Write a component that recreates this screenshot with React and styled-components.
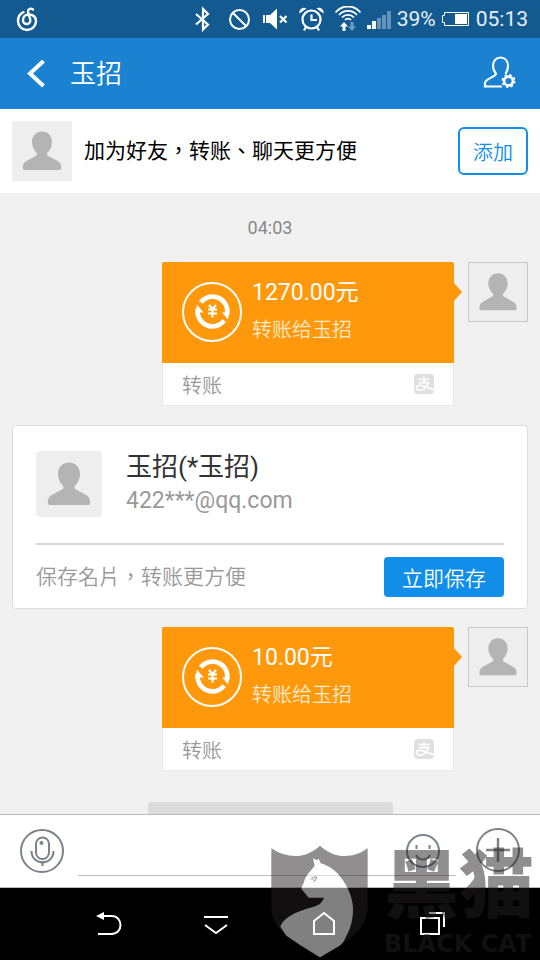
import React from 'react'
import styled, { createGlobalStyle } from 'styled-components'

const GlobalStyle = createGlobalStyle`
  * {
    box-sizing: border-box;
  }
  body {
    margin: 0;
    background: #f1f1f1;
    font-family: Roboto, "Noto Sans CJK TC", sans-serif;
  }
  button, input {
    font-family: inherit;
    padding: 0;
    border: 0;
    background: none;
  }
  svg {
    display: block;
    flex: none;
  }
`

const Page = styled.div`
  position: relative;
  display: flex;
  flex-direction: column;
  height: 100vh;
  overflow: hidden;
`
const StatusBar = styled.div`
  display: flex;
  flex: none;
  align-items: center;
  gap: 6px;
  height: 38px;
  padding: 0 12px 0 16px;
  background: #135a91;
  color: #fff;
  font-size: 21px;
`
const Spacer = styled.div`
  flex: 1;
`
const StatusText = styled.span`
  color: #e8f0f6;
  line-height: 38px;
`
const Header = styled.header`
  display: flex;
  flex: none;
  align-items: center;
  gap: 22px;
  height: 71px;
  padding: 0 22px 0 24px;
  background: #1b82d2;
`
const Title = styled.h1`
  flex: 1;
  margin: 0;
  color: #fff;
  font-size: 26px;
  font-weight: 350;
  line-height: 40px;
`
const IconButton = styled.button`
  flex: none;
  color: ${props => props.$color || '#fff'};
`
const FriendBar = styled.section`
  display: flex;
  flex: none;
  align-items: center;
  gap: 12px;
  height: 84px;
  padding: 0 12px;
  background: #fff;
`
const FriendText = styled.p`
  flex: 1;
  margin: 0;
  color: #000;
  font-size: 21px;
  line-height: 32px;
`
const AddButton = styled.button`
  width: 70px;
  height: 48px;
  border: 2px solid #108ee9;
  border-radius: 6px;
  color: #108ee9;
  font-size: 20px;
  font-weight: 350;
`
const AvatarBox = styled.div`
  display: flex;
  flex: none;
  width: ${props => props.$size || 60}px;
  height: ${props => props.$size || 60}px;
  border: ${props => (props.$bordered ? '1px solid #c8c8c8' : '0')};
  border-radius: ${props => (props.$rounded ? '4px' : '0')};
  background: #eee;
  svg {
    width: 100%;
    height: 100%;
  }
`
const Chat = styled.main`
  display: flex;
  flex: 1;
  flex-direction: column;
  min-height: 0;
  overflow: hidden;
  padding: 24px 12px 0;
  background: #f1f1f1;
`
const Time = styled.time`
  flex: none;
  margin-bottom: 23px;
  color: #888;
  font-size: 18px;
  line-height: 22px;
  text-align: center;
`
const Message = styled.article`
  display: flex;
  flex: none;
  justify-content: flex-end;
  gap: 14px;
`
const Bubble = styled.div`
  width: 292px;
`
const BubbleTop = styled.div`
  position: relative;
  display: flex;
  gap: 10px;
  height: 101px;
  padding: 14px 20px;
  border-radius: 2px 2px 0 0;
  background: #ff980b;
  color: #fff;
  &::after {
    content: '';
    position: absolute;
    top: 21px;
    left: 100%;
    border: solid transparent;
    border-width: 9px 0 9px 8px;
    border-left-color: #ff980b;
  }
  > svg {
    margin-top: 6px;
  }
`
const Amount = styled.div`
  font-size: 23px;
  line-height: 34px;
`
const Note = styled.div`
  margin-top: 4px;
  color: #ffeacb;
  font-size: 20px;
  font-weight: 350;
  line-height: 32px;
`
const BubbleBottom = styled.div`
  display: flex;
  align-items: center;
  justify-content: space-between;
  height: 43px;
  padding: 0 19px;
  border: 1px solid #e8e8e8;
  border-top: 0;
  background: #fff;
  color: #999;
  font-size: 20px;
  font-weight: 350;
`
const AlipayMark = styled.span`
  width: 20px;
  height: 20px;
  border-radius: 4px;
  background: #e0e0e0;
  svg {
    width: 20px;
    height: 20px;
  }
`
const Card = styled.section`
  flex: none;
  margin: 19px 0 18px;
  padding: 25px 23px 11px;
  border: 1px solid #ddd;
  border-radius: 4px;
  background: #fff;
`
const CardTop = styled.div`
  display: flex;
  gap: 24px;
  height: 94px;
  border-bottom: 2px solid #d8d8d8;
`
const CardName = styled.div`
  color: #333;
  font-size: 26px;
  line-height: 32px;
`
const CardMail = styled.div`
  color: #999;
  font-size: 23px;
  line-height: 36px;
`
const CardBottom = styled.div`
  display: flex;
  align-items: center;
  justify-content: space-between;
  margin-top: 12px;
  color: #999;
  font-size: 21px;
  font-weight: 350;
  line-height: 40px;
`
const SaveButton = styled.button`
  width: 120px;
  height: 40px;
  border-radius: 4px;
  background: #108ee9;
  color: #fff;
  font-size: 21px;
  font-weight: 350;
`
const Notice = styled.div`
  flex: none;
  align-self: center;
  width: 245px;
  height: 40px;
  margin-top: 31px;
  border-radius: 4px;
  background: #dcdcdc;
`
const InputBar = styled.form`
  display: flex;
  flex: none;
  align-items: center;
  height: 74px;
  padding: 0 20px;
  border-top: 1px solid #bbb;
  border-bottom: 1px solid #bbb;
  background: #fff;
`
const Field = styled.label`
  display: flex;
  flex: 1;
  align-items: center;
  align-self: flex-end;
  height: 50px;
  margin: 0 20px 11px 14px;
  padding-right: 16px;
  border-bottom: 1px solid #bbb;
`
const TextInput = styled.input`
  flex: 1;
  min-width: 0;
  height: 40px;
  outline: none;
  font-size: 21px;
`
const NavBar = styled.nav`
  display: flex;
  flex: none;
  align-items: center;
  justify-content: space-between;
  height: 72px;
  padding: 0 92px;
  background: #000;
`
const Watermark = styled.div`
  position: absolute;
  right: 0;
  bottom: 0;
  display: flex;
  align-items: flex-end;
  gap: 14px;
  opacity: 0.5;
  color: #231f20;
  pointer-events: none;
`
const Brand = styled.div`
  width: 156px;
  white-space: nowrap;
`
const BrandName = styled.div`
  font-family: "Liberation Sans", "Noto Sans CJK SC", sans-serif;
  font-size: 75px;
  font-weight: 900;
  line-height: 84px;
`
const BrandLatin = styled.div`
  font-family: "DejaVu Sans", sans-serif;
  font-size: 24px;
  font-weight: 700;
  line-height: 32px;
`

const Avatar = props => (
  <AvatarBox {...props}>
    <svg viewBox="0 0 60 60" fill="#b4b4b4">
      <path d="M30 10.500c-6 0-10 4.500-10 10.500 0 4 2 8.500 4.500 10.500 1 1 .5 2.500-.8 3.500L14.500 40c-3 1.700-3.700 3.500-3.700 6.500 0 2 .7 2.500 2 2.500h34.400c1.300 0 2-.5 2-2.500 0-3-.7-4.800-3.700-6.500L36.300 35c-1.300-1-1.800-2.500-.8-3.500C38 29.500 40 25 40 21c0-6-4-10.500-10-10.500z" />
    </svg>
  </AvatarBox>
)

const StatusIcons = () => (
  <>
    <svg width="31" height="26" viewBox="0 0 31 26" fill="none" stroke="#fff" strokeWidth="2.200">
      <path d="M9 8l12 10.500-5 5V3l5 5L9 18.500" />
    </svg>
    <svg width="31" height="26" viewBox="0 0 31 26" fill="none" stroke="#fff" strokeWidth="2">
      <circle cx="15.500" cy="13.500" r="9.500" />
      <path d="M9 7l13 13" />
    </svg>
    <svg width="28" height="26" viewBox="0 0 28 26" fill="#fff">
      <path d="M2 9h2v8H2zM5 9h4l7-6.500v21L9 17H5z" />
      <path d="M19 10l6.500 6.500M25.500 10L19 16.500" stroke="#fff" strokeWidth="2.200" />
    </svg>
    <svg width="34" height="26" viewBox="0 0 34 26" fill="none" stroke="#fff" strokeWidth="2.200">
      <circle cx="16.500" cy="13.500" r="9" />
      <path d="M16.500 8.500V14H22M11 21l-2 3.500M22 21l2 3.500" />
      <path d="M4.500 7.500c-1-4 3.500-7 7-5zM28.500 7.500c1-4-3.500-7-7-5z" fill="#fff" stroke="none" />
    </svg>
    <svg width="26" height="26" viewBox="0 0 26 26" fill="none" stroke="#fff" strokeWidth="1.800">
      <path d="M.500 6.500a16 16 0 0 1 25 0M4 9a12 12 0 0 1 18 0M7 11.500a8 8 0 0 1 12 0M10 14a4 4 0 0 1 6 0" />
      <path d="M9 16l4 4.500h-2.500V25h-3v-4.500H5z" fill="#fff" stroke="none" />
      <path d="M17 25l4-4.500h-2.500V16h-3v4.500H13z" fill="#6f9cc0" stroke="none" />
    </svg>
    <svg width="24" height="26" viewBox="0 0 24 26" fill="#6593b8">
      <path d="M0 19h4v4H0zM5 15h4v8H5z" fill="#fff" />
      <path d="M10 12h4v11h-4zM15 9h4v14h-4zM20 5h4v18h-4z" />
    </svg>
  </>
)

const TransferIcon = () => (
  <svg width="60" height="60" viewBox="0 0 60 60" fill="none" stroke="#fff">
    <circle cx="30" cy="30" r="29" strokeWidth="2" />
    <path d="M18.800 20.300A14.900 14.900 0 0 1 45.200 32" strokeWidth="4.600" />
    <path d="M42.200 38.700A14.900 14.900 0 0 1 15.800 27" strokeWidth="4.600" />
    <path d="M40 30.500l6 7 1.500-7zM21.500 30.500l-6.500-8-1.500 8z" fill="#fff" stroke="none" />
    <path d="M27 23l3.500 4 3.500-4M30.500 26v9.500M26 27.500h9M26 31.500h9" strokeWidth="2.200" />
  </svg>
)

const Transfer = ({ amount, note }) => (
  <Message>
    <Bubble>
      <BubbleTop>
        <TransferIcon />
        <div>
          <Amount>{amount}</Amount>
          <Note>{note}</Note>
        </div>
      </BubbleTop>
      <BubbleBottom>
        转账
        <AlipayMark>
          <svg viewBox="0 0 20 20" fill="none" stroke="#fff" strokeWidth="1.600">
            <path d="M4.500 5.500h11M10 2.500v6M5 8.800h9.500c-1 3.500-4.500 7.400-8.500 7.400-5 0-4.500-5 0-5 3.500 0 8 3.300 14 4.500" />
          </svg>
        </AlipayMark>
      </BubbleBottom>
    </Bubble>
    <Avatar $bordered />
  </Message>
)

const App = () => (
  <Page>
    <GlobalStyle />
    <StatusBar>
      <svg width="22" height="26" viewBox="0 0 22 26" fill="none" stroke="#fff" strokeWidth="2.400" strokeLinecap="round">
        <path d="M7.500 6.200C3.500 8 2 11.500 2 15a9 9 0 0 0 18 0c0-4-3-6.500-7-6.500S7 11 7 14a3.700 3.700 0 0 0 7.400.5C14.400 12 12 8 12 5.500c0-3 3-3.500 5-2" />
      </svg>
      <Spacer />
      <StatusIcons />
      <StatusText>39%</StatusText>
      <svg width="28" height="26" viewBox="0 0 28 26" fill="none" stroke="#fff">
        <path d="M2.500 6.500h24v13h-24v-3h-2v-7h2z" />
        <path d="M13 8h12v10H13z" fill="#fff" stroke="none" />
      </svg>
      <StatusText>05:13</StatusText>
    </StatusBar>
    <Header>
      <IconButton type="button" aria-label="返回">
        <svg width="24" height="28" viewBox="0 0 24 28" fill="none" stroke="#fff" strokeWidth="4">
          <path d="M19.500 1L6 13.500 19.500 26" />
        </svg>
      </IconButton>
      <Title>玉招</Title>
      <IconButton type="button" aria-label="设置">
        <svg width="36" height="36" viewBox="0 0 36 36" fill="none" stroke="#fff" strokeWidth="2.200">
          <path d="M20 30.500H3v-3.500c0-4 10-6 11-9 0-1-3-3-3-8 0-5 3-8.500 7.500-8.500S26 5 26 10c0 4-1.500 6-2.500 8" />
          <circle cx="26.500" cy="25" r="4.400" strokeWidth="2.600" />
          <circle cx="26.500" cy="25" r="6" strokeWidth="2" strokeDasharray="2.400 2.312" />
        </svg>
      </IconButton>
    </Header>
    <FriendBar>
      <Avatar />
      <FriendText>加为好友，转账、聊天更方便</FriendText>
      <AddButton type="button">添加</AddButton>
    </FriendBar>
    <Chat>
      <Time>04:03</Time>
      <Transfer amount="1270.00元" note="转账给玉招" />
      <Card>
        <CardTop>
          <Avatar $size={66} $rounded />
          <div>
            <CardName>玉招(*玉招)</CardName>
            <CardMail>422***@qq.com</CardMail>
          </div>
        </CardTop>
        <CardBottom>
          保存名片，转账更方便
          <SaveButton type="button">立即保存</SaveButton>
        </CardBottom>
      </Card>
      <Transfer amount="10.00元" note="转账给玉招" />
      <Notice />
    </Chat>
    <InputBar>
      <IconButton type="button" aria-label="语音" $color="#7d8188">
        <svg width="44" height="44" viewBox="0 0 44 44" fill="none" stroke="currentColor" strokeWidth="2">
          <circle cx="22" cy="22" r="21" />
          <rect x="16" y="8.500" width="13" height="21.500" rx="6.500" />
          <path d="M11.500 22c0 15 22 15 22 0M22.500 33v4" />
          <circle cx="21.500" cy="14" r="1" />
        </svg>
      </IconButton>
      <Field>
        <TextInput type="text" aria-label="消息" />
        <IconButton type="button" aria-label="表情" $color="#7d8188">
          <svg width="34" height="34" viewBox="0 0 34 34" fill="none" stroke="currentColor" strokeWidth="2">
            <circle cx="17" cy="17" r="16" />
            <path d="M10.500 11v4M23.500 11v4M10 21c3 6 11 6 14 0" />
          </svg>
        </IconButton>
      </Field>
      <IconButton type="button" aria-label="更多" $color="#7d8188">
        <svg width="44" height="46" viewBox="0 0 44 46" fill="none" stroke="currentColor" strokeWidth="2">
          <circle cx="22" cy="22" r="21" />
          <path d="M22 10v24M10 22h24" strokeWidth="2.400" />
        </svg>
      </IconButton>
    </InputBar>
    <NavBar>
      <IconButton type="button" aria-label="后退">
        <svg width="32" height="30" viewBox="0 0 32 30" fill="none" stroke="#fff" strokeWidth="2">
          <path d="M6 7h13.500c12 0 12 18 0 18H6" />
          <path d="M4 7l8-4v8z" fill="#fff" stroke="none" />
        </svg>
      </IconButton>
      <IconButton type="button" aria-label="收起">
        <svg width="32" height="30" viewBox="0 0 32 30" fill="none" stroke="#fff" strokeWidth="2">
          <path d="M4 8h24M5 16l11 8 11-8" />
        </svg>
      </IconButton>
      <IconButton type="button" aria-label="主页">
        <svg width="32" height="30" viewBox="0 0 32 30" fill="none" stroke="#fff" strokeWidth="2">
          <path d="M6 12l10-8 10 8v13H6z" />
        </svg>
      </IconButton>
      <IconButton type="button" aria-label="最近">
        <svg width="32" height="30" viewBox="0 0 32 30" fill="none" stroke="#fff" strokeWidth="2">
          <path d="M5 9h18v16H5zM13 4h15v14" />
        </svg>
      </IconButton>
    </NavBar>
    <Watermark>
      <svg width="100" height="116" viewBox="30 192 300 348">
        <path d="M34 205c50 34 105 30 146-8 41 38 96 42 143 8v175c0 75-75 110-143 155C112 490 34 455 34 380z" fill="#231f20" />
        <path d="M159 234l11 7 6-5 6 14c26 8 45 22 60 42 22 28 36 60 37 94 0 35-8 60-20 82-6 14-12 24-20 29l-59 35-56-35-45-30-18-27c5-15 15-22 25-30 22-14 45-22 65-27 20-5 33-10 41-30h-46l-22-26c2-10 6-16 8-20 2-12 5-14 7-19l25-31z" fill="#fff" />
        <path d="M152 298l8-6 9-1-2 10-6 5M158 296l3 6" fill="none" stroke="#231f20" strokeWidth="3" />
      </svg>
      <Brand>
        <BrandName>黑猫</BrandName>
        <BrandLatin>BLACK CAT</BrandLatin>
      </Brand>
    </Watermark>
  </Page>
)

export default App
